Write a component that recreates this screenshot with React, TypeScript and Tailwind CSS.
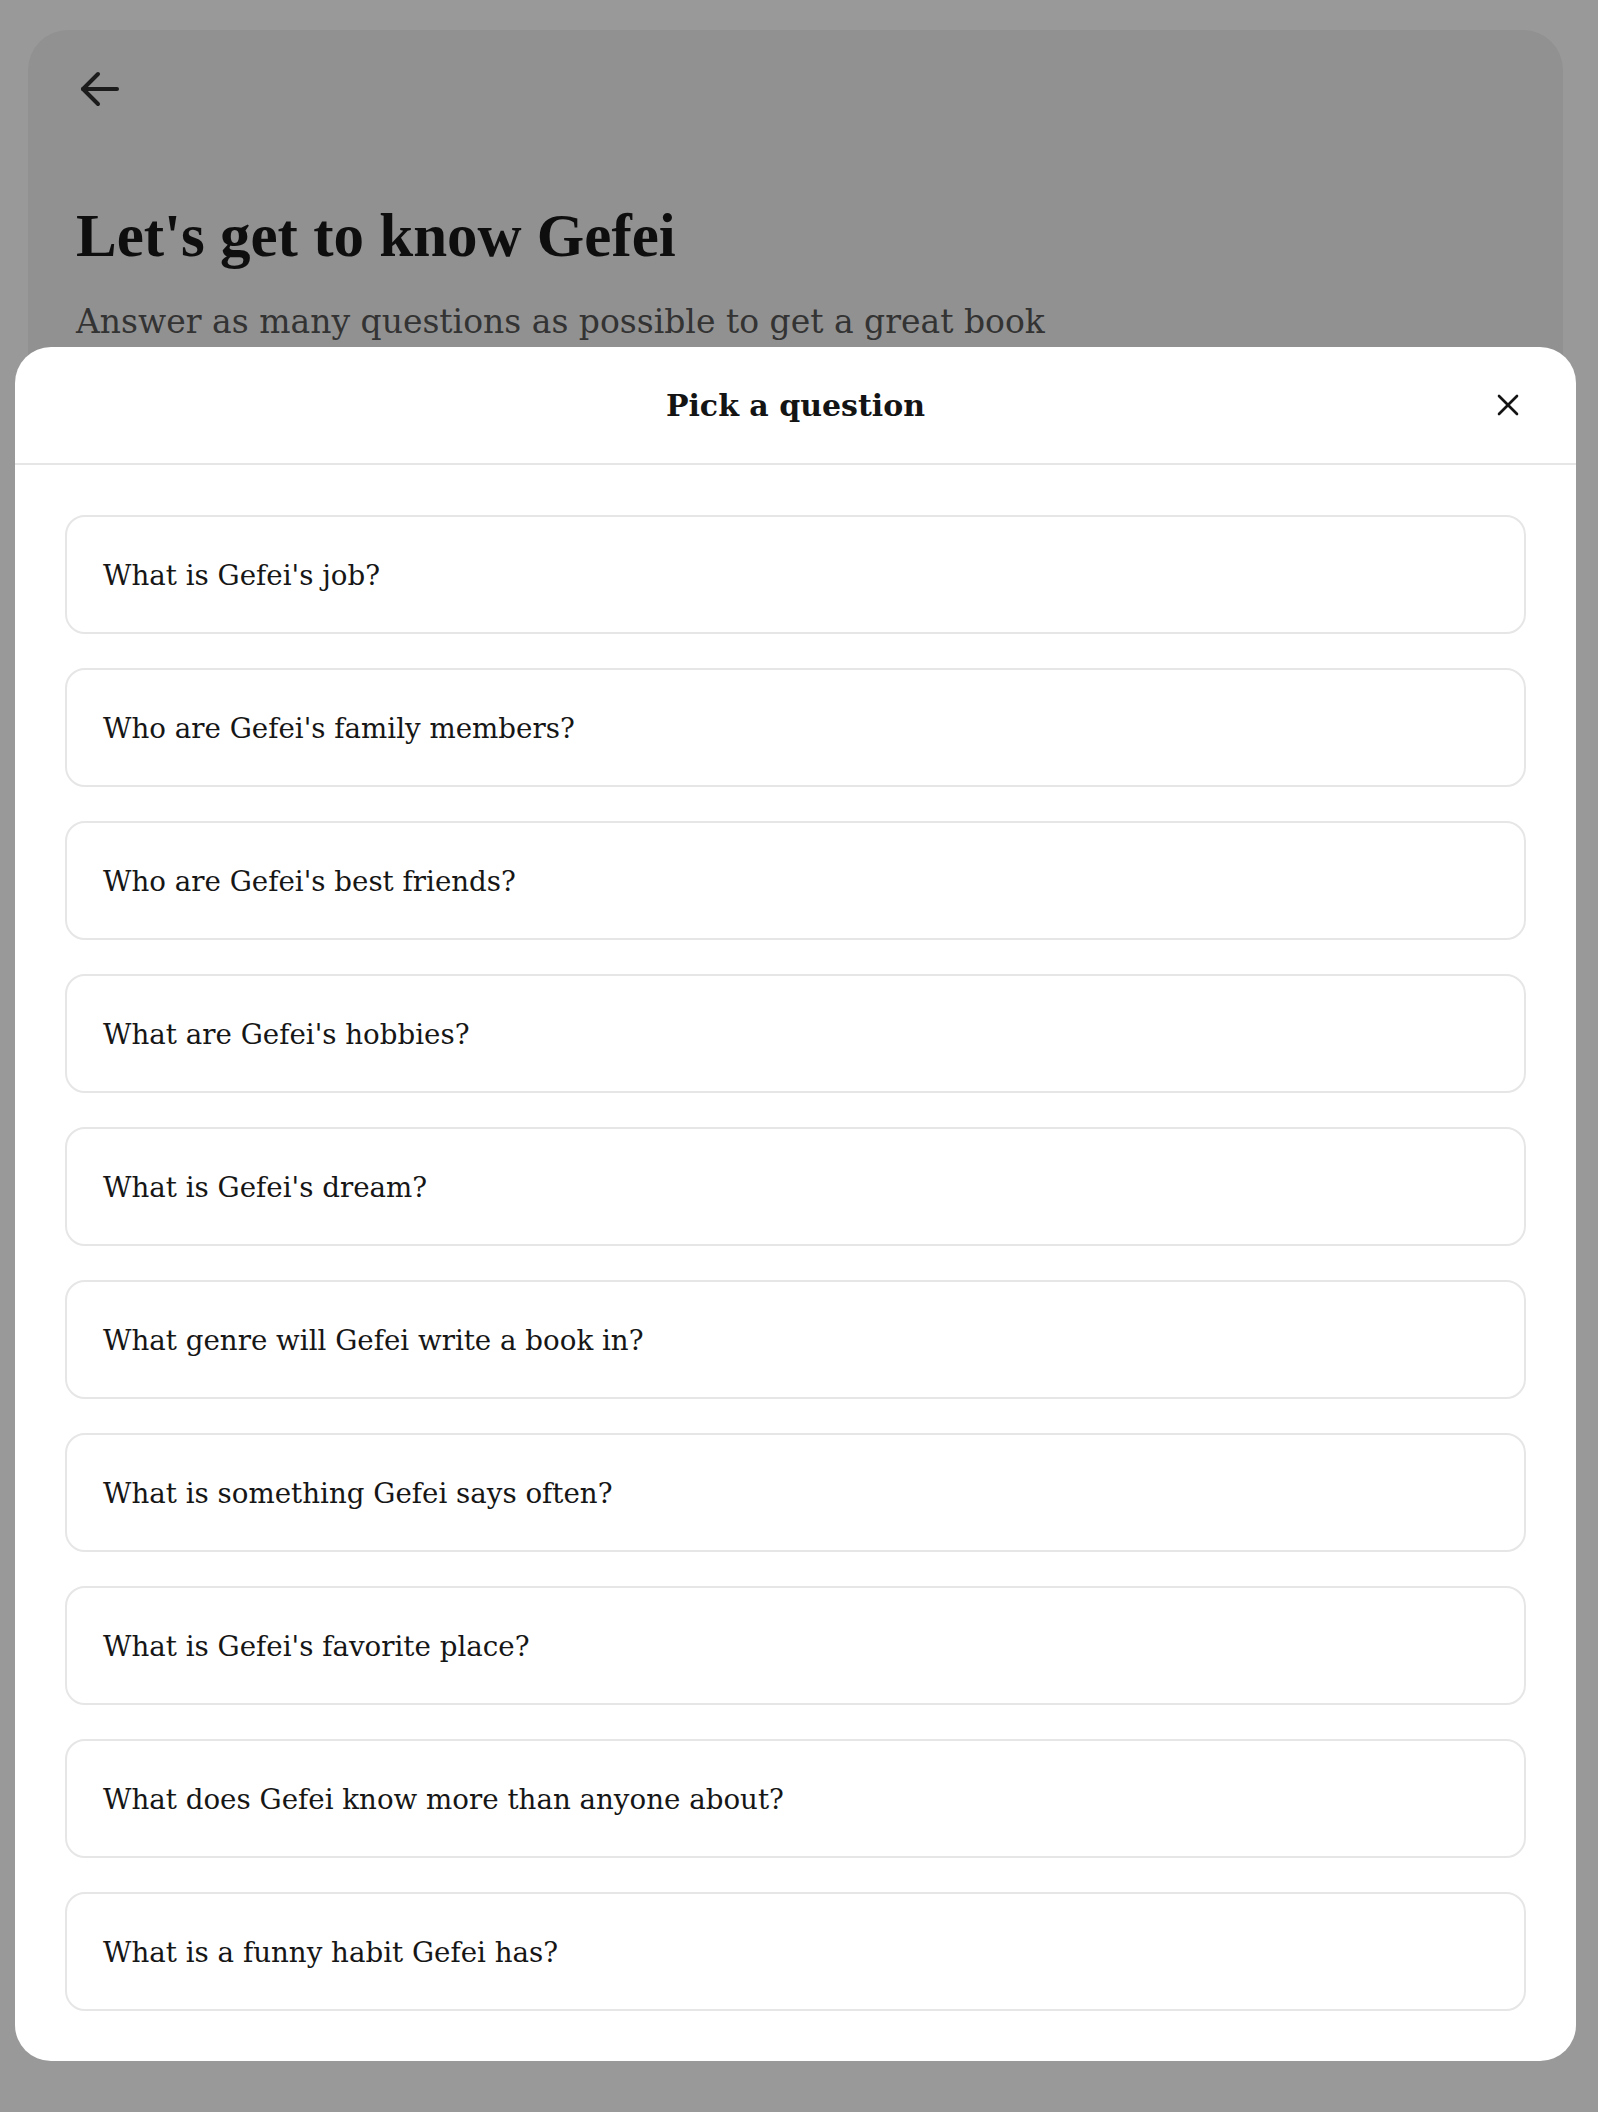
import { useState } from 'react';

const questions = [
  "What is Gefei's job?",
  "Who are Gefei's family members?",
  "Who are Gefei's best friends?",
  "What are Gefei's hobbies?",
  "What is Gefei's dream?",
  'What genre will Gefei write a book in?',
  'What is something Gefei says often?',
  "What is Gefei's favorite place?",
  'What does Gefei know more than anyone about?',
  'What is a funny habit Gefei has?',
];

export default function App() {
  const [picked, setPicked] = useState<number | null>(null);

  return (
    <div className="relative h-[2112px] overflow-hidden bg-[#999999] pt-[30px] pl-[28px] pr-[35px]">
      {/* Page behind the overlay */}
      <div className="h-[1990px] rounded-[40px] bg-[#919191] pl-[48px] pt-[39px]">
        <button className="ml-[3px] block text-[#1c1c1c]">
          <svg width="44" height="40" viewBox="0 0 44 40" fill="none" stroke="currentColor" strokeWidth="4" strokeLinecap="round" strokeLinejoin="round">
            <path d="M38 20H4" />
            <path d="M19 5L4 20L19 35" />
          </svg>
        </button>
        <h1 className="mt-[91px] text-[61px] leading-[72px] font-bold text-[#0e0e0e] [font-family:'Liberation_Serif',serif]">
          Let's get to know Gefei
        </h1>
        <p className="mt-[30px] text-[33px] leading-[40px] text-[#333333] [font-family:'DejaVu_Serif',serif]">
          Answer as many questions as possible to get a great book
        </p>
      </div>

      {/* Question picker sheet */}
      <div className="absolute top-[347px] left-[15px] w-[1561px] rounded-[36px] bg-white [font-family:'DejaVu_Serif',serif]">
        <div className="grid h-[118px] grid-cols-[1fr_auto_1fr] items-center border-b-2 border-[#e6e6e6]">
          <div />
          <h2 className="text-[30px] font-bold text-[#141414]">Pick a question</h2>
          <div className="flex justify-end pr-[56px]">
            <button className="text-[#141414]">
              <svg width="24" height="24" viewBox="0 0 24 24" fill="none" stroke="currentColor" strokeWidth="2.6" strokeLinecap="round">
                <path d="M3 3L21 21" />
                <path d="M21 3L3 21" />
              </svg>
            </button>
          </div>
        </div>
        <div className="flex flex-col gap-[34px] p-[50px]">
          {questions.map((q, i) => (
            <button
              key={q}
              onClick={() => setPicked(i)}
              className={`flex h-[119px] items-center rounded-[20px] border-2 px-[36px] pt-[2px] text-left text-[27.7px] text-[#161616] ${
                picked === i ? 'border-[#bdbdbd]' : 'border-[#e6e6e6]'
              }`}
            >
              {q}
            </button>
          ))}
        </div>
      </div>
    </div>
  );
}
